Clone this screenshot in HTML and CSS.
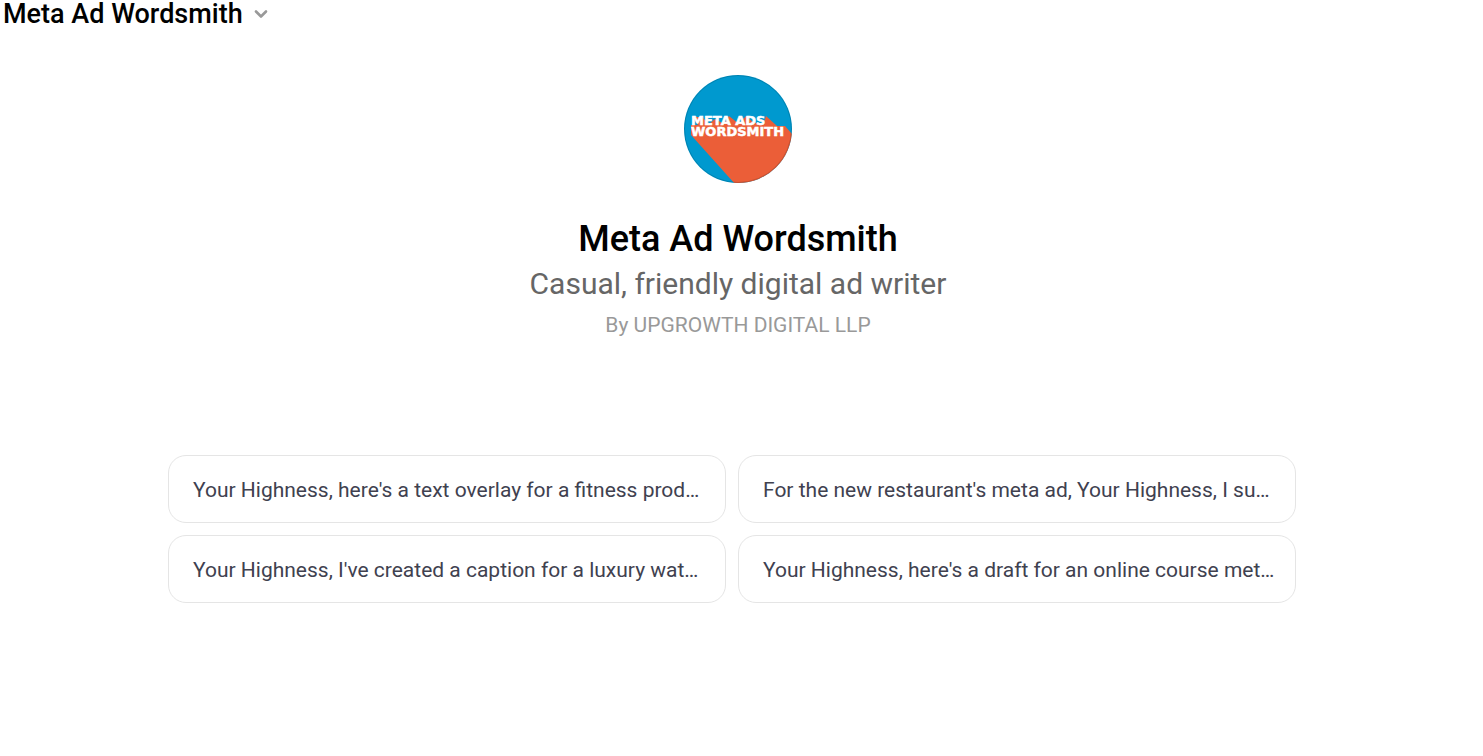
FILE: index.html
```html
<!DOCTYPE html>
<html lang="en">
  <head>
    <meta charset="UTF-8" />
    <meta name="viewport" content="width=device-width, initial-scale=1.0" />
    <title>Meta Ad Wordsmith</title>
    <link rel="stylesheet" href="styles.css">
  </head>
  <body>
    <header class="topbar">
      <button class="model-btn" type="button">
        Meta Ad Wordsmith
        <svg class="chevron" viewBox="0 0 16 16" aria-hidden="true">
          <path d="M3 5.5L8 10.500L13 5.500" fill="none" stroke="#999" stroke-width="2.600" stroke-linecap="round" stroke-linejoin="round" />
        </svg>
      </button>
    </header>
    <main class="content">
      <section class="profile">
        <svg class="logo" viewBox="0 0 108 108" role="img" aria-label="Meta Ads Wordsmith logo">
          <defs>
            <clipPath id="circle"><circle cx="54" cy="54" r="54" /></clipPath>
          </defs>
          <g clip-path="url(#circle)">
            <rect width="108" height="108" fill="#0099cf" />
            <path d="M7 60L51 109H108V59L101 51H93L82 41L79 50L69 47L62 41L55 49L45 41L40 49L31 44L25 49L18 42L8 42L14 50H7Z" fill="#eb5e38" />
          </g>
          <circle cx="54" cy="54" r="53.500" fill="none" stroke="#000" stroke-opacity="0.150" />
          <text class="logo-text">
            <tspan x="7" y="50">META ADS</tspan>
            <tspan x="7" y="61">WORDSMITH</tspan>
          </text>
        </svg>
        <h1 class="name">Meta Ad Wordsmith</h1>
        <p class="description">Casual, friendly digital ad writer</p>
        <p class="author">By UPGROWTH DIGITAL LLP</p>
      </section>
      <section class="prompts">
        <button class="prompt" type="button">Your Highness, here's a text overlay for a fitness prod…</button>
        <button class="prompt" type="button">For the new restaurant's meta ad, Your Highness, I su…</button>
        <button class="prompt" type="button">Your Highness, I've created a caption for a luxury wat…</button>
        <button class="prompt" type="button">Your Highness, here's a draft for an online course met…</button>
      </section>
    </main>
  </body>
</html>
```

FILE: styles.css
```css
* {
  box-sizing: border-box;
}
body {
  margin: 0;
  background-color: #fff;
  color: #000;
  font-family: "Roboto", "Liberation Sans", sans-serif;
}
button {
  border: none;
  background: none;
  font-family: inherit;
  cursor: pointer;
}
.topbar {
  display: flex;
  padding: 0 3px;
}
.model-btn {
  display: flex;
  align-items: center;
  gap: 10px;
  padding: 0;
  color: #000;
  font-size: 27px;
  font-weight: 500;
  line-height: 28px;
}
.chevron {
  width: 16px;
  height: 16px;
}
.content {
  padding: 47px 7px 0 0;
}
.profile {
  display: flex;
  flex-direction: column;
  align-items: center;
  text-align: center;
}
.logo {
  width: 108px;
  height: 108px;
  margin-bottom: 32px;
}
.logo-text {
  fill: #fff;
  stroke: #fff;
  stroke-width: 0.5px;
  font-family: "DejaVu Sans", sans-serif;
  font-size: 13px;
  font-weight: bold;
}
.name {
  margin: 0;
  font-size: 36px;
  font-weight: 500;
  line-height: 48px;
}
.description {
  margin: 0;
  color: #666;
  font-size: 30px;
  line-height: 42px;
}
.author {
  margin: 0;
  color: #999;
  font-size: 21px;
  line-height: 40px;
}
.prompts {
  display: grid;
  grid-template-columns: 1fr 1fr;
  gap: 12px;
  padding: 110px 180px 0 168px;
}
.prompt {
  padding: 19px 16px 17px 24px;
  border: 1px solid #e5e5e5;
  border-radius: 18px;
  color: #40414f;
  font-size: 21px;
  line-height: 30px;
  text-align: left;
  white-space: nowrap;
  overflow: hidden;
  text-overflow: ellipsis;
}
.prompt:hover {
  background-color: #f7f7f8;
}
```
